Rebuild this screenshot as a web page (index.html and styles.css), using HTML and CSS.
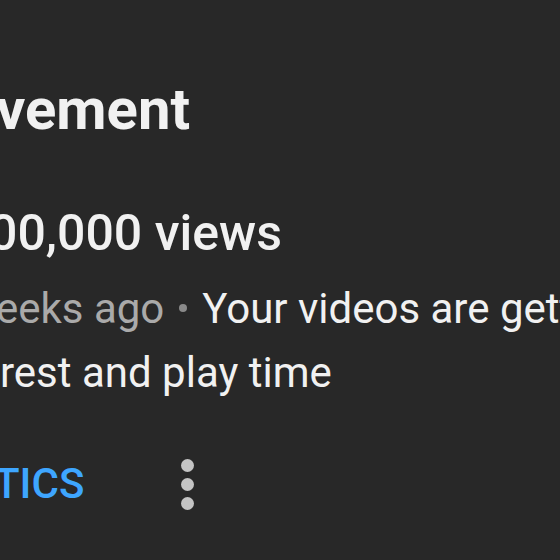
FILE: index.html
```html
<!DOCTYPE html>
<html lang="en">
<head>
    <meta charset="UTF-8">
    <meta name="viewport" content="width=device-width, initial-scale=1.0">
    <title>Achievement</title>
    <link rel="stylesheet" href="styles.css">
</head>
<body>
<div class="notice">
    <div class="notice-title">vement</div>
    <div class="notice-headline">00,000 views</div>
    <div class="notice-text">
        <div class="line first"><span class="time">eeks ago</span><span class="sep"></span>Your videos are getting more</div>
        <div class="line">rest and play time</div>
    </div>
    <div class="actions">
        <span class="action-btn">TICS</span>
        <span class="kebab"><i></i><i></i><i></i></span>
    </div>
</div>
</body>
</html>
```

FILE: styles.css
```css
html, body {
    margin: 0;
    height: 100%;
    background: #282828;
    overflow: hidden;
}
body {
    font-family: Roboto, "Liberation Sans", sans-serif;
    color: #f1f1f1;
}
.notice {
    padding-top: 75px;
    white-space: nowrap;
}
.notice-title {
    font-size: 58px;
    font-weight: 700;
    line-height: 68px;
    margin-left: -4px;
}
.notice-headline {
    font-size: 50px;
    font-weight: 500;
    line-height: 60px;
    margin-top: 60px;
    margin-left: -11px;
}
.notice-text {
    font-size: 42px;
    line-height: 64px;
    margin-top: 14px;
}
.line.first {
    margin-left: -4px;
}
.time {
    color: #aaaaaa;
}
.sep {
    display: inline-block;
    width: 8px;
    height: 8px;
    border-radius: 50%;
    background: #8a8a8a;
    vertical-align: middle;
    margin: 0 15px;
    position: relative;
    top: -4px;
}
.actions {
    display: flex;
    align-items: center;
    margin-top: 49px;
}
.action-btn {
    color: #3ea6ff;
    font-size: 42px;
    font-weight: 500;
    line-height: 60px;
    margin-left: -6px;
}
.kebab {
    display: flex;
    flex-direction: column;
    gap: 6px;
    margin-left: 97px;
}
.kebab i {
    width: 13px;
    height: 13px;
    border-radius: 50%;
    background: #c4c4c4;
}
```
